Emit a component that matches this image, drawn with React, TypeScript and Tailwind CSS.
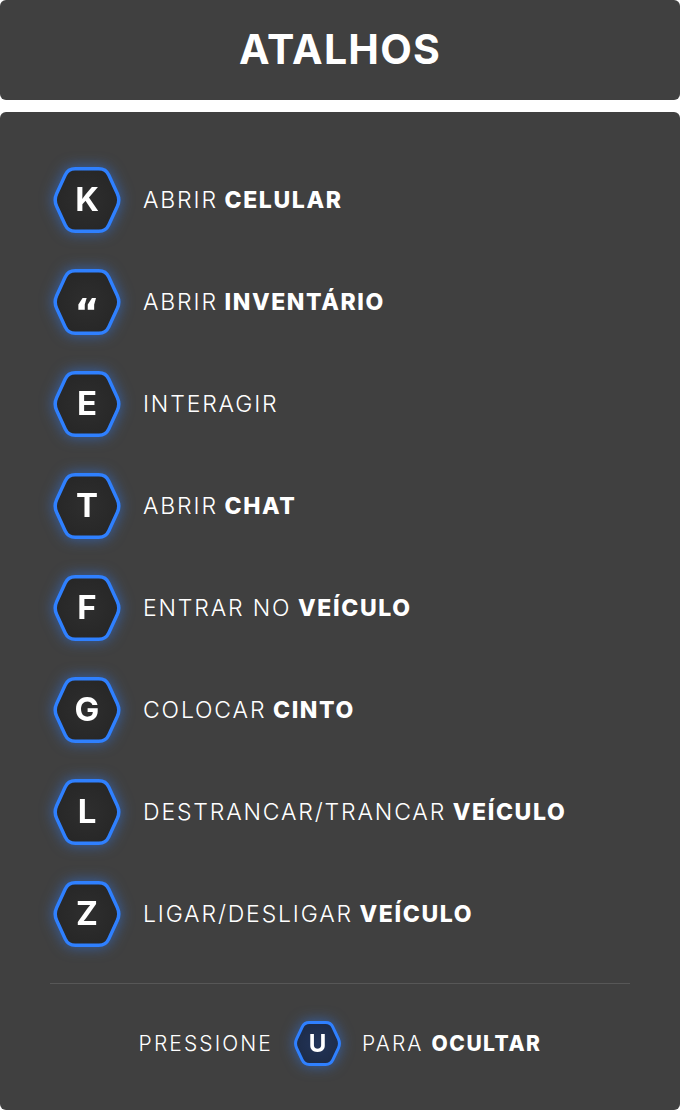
import React from 'react';

type Shortcut = { key: string; text: string; bold?: string };

const shortcuts: Shortcut[] = [
  { key: 'K', text: 'ABRIR', bold: 'CELULAR' },
  { key: '“', text: 'ABRIR', bold: 'INVENTÁRIO' },
  { key: 'E', text: 'INTERAGIR' },
  { key: 'T', text: 'ABRIR', bold: 'CHAT' },
  { key: 'F', text: 'ENTRAR NO', bold: 'VEÍCULO' },
  { key: 'G', text: 'COLOCAR', bold: 'CINTO' },
  { key: 'L', text: 'DESTRANCAR/TRANCAR', bold: 'VEÍCULO' },
  { key: 'Z', text: 'LIGAR/DESLIGAR', bold: 'VEÍCULO' },
];

// rounded hexagon path (flat top/bottom, pointed left/right)
const hexPath = (w: number, h: number, inset: number, r: number) => {
  const dx = w * 0.23;
  const pts = [
    [dx, inset],
    [w - dx, inset],
    [w - inset, h / 2],
    [w - dx, h - inset],
    [dx, h - inset],
    [inset, h / 2],
  ];
  let d = '';
  pts.forEach((p, i) => {
    const prev = pts[(i + pts.length - 1) % pts.length];
    const next = pts[(i + 1) % pts.length];
    const toward = (a: number[], b: number[]) => {
      const vx = b[0] - a[0];
      const vy = b[1] - a[1];
      const len = Math.hypot(vx, vy);
      return [a[0] + (vx / len) * r, a[1] + (vy / len) * r];
    };
    const s = toward(p, prev);
    const e = toward(p, next);
    d += `${i === 0 ? 'M' : 'L'}${s[0]},${s[1]} Q${p[0]},${p[1]} ${e[0]},${e[1]} `;
  });
  return d + 'Z';
};

const KeyHex: React.FC<{ label: string; small?: boolean }> = ({ label, small }) => {
  const w = small ? 49 : 70;
  const h = small ? 45 : 66;
  const isQuote = label === '“';
  return (
    <div
      className={`relative shrink-0 drop-shadow-[0_0_7px_rgba(45,125,255,0.55)] ${
        small ? 'w-[49px] h-[45px]' : 'w-[70px] h-[66px]'
      }`}
    >
      <svg width={w} height={h} viewBox={`0 0 ${w} ${h}`} className="absolute inset-0">
        <defs>
          <radialGradient id={small ? 'fillSmall' : 'fillBig'} cx="50%" cy="50%" r="60%">
            <stop offset="0%" stopColor={small ? '#223459' : '#2e2e2e'} />
            <stop offset="100%" stopColor={small ? '#1d2a44' : '#262626'} />
          </radialGradient>
        </defs>
        <path
          d={hexPath(w, h, small ? 1.5 : 1.75, small ? 5 : 7)}
          fill={`url(#${small ? 'fillSmall' : 'fillBig'})`}
          stroke="#2f80ff"
          strokeWidth={small ? 3 : 3.5}
        />
      </svg>
      {isQuote ? (
        <span
          className="absolute inset-0 flex items-center justify-center pt-[20px] text-white font-bold text-[38px]"
          style={{ fontFamily: '"DejaVu Sans", sans-serif' }}
        >
          {label}
        </span>
      ) : (
        <span
          className={`absolute inset-0 flex items-center justify-center text-white font-bold ${
            small ? 'text-[24px]' : 'text-[33px]'
          }`}
        >
          {label}
        </span>
      )}
    </div>
  );
};

const App: React.FC = () => {
  return (
    <div
      className="w-[680px] h-[1110px] bg-white flex flex-col"
      style={{ fontFamily: 'Inter, "Liberation Sans", sans-serif' }}
    >
      <div className="h-[100px] shrink-0 rounded-md bg-[#404040] flex items-center justify-center">
        <h1 className="text-[41px] font-bold text-white tracking-[0.03em]">ATALHOS</h1>
      </div>

      <div className="mt-3 flex-1 rounded-md bg-[#404040] px-[50px] pt-[55px]">
        <div className="flex flex-col gap-[36px]">
          {shortcuts.map((s) => (
            <div key={s.key} className="flex items-center gap-[21px] pl-[2px]">
              <KeyHex label={s.key} />
              <p className="text-[23px] text-white font-light tracking-[0.08em]">
                {s.text}
                {s.bold && <span className="font-extrabold tracking-[0.07em]"> {s.bold}</span>}
              </p>
            </div>
          ))}
        </div>

        <div className="mt-[36px] h-px bg-[#575757]" />

        <div className="mt-[37px] flex items-center justify-center gap-5 text-[21px] text-white">
          <span className="font-light tracking-[0.1em]">PRESSIONE</span>
          <KeyHex label="U" small />
          <span className="font-light tracking-[0.1em]">
            PARA <span className="font-extrabold tracking-[0.07em]">OCULTAR</span>
          </span>
        </div>
      </div>
    </div>
  );
};

export default App;
